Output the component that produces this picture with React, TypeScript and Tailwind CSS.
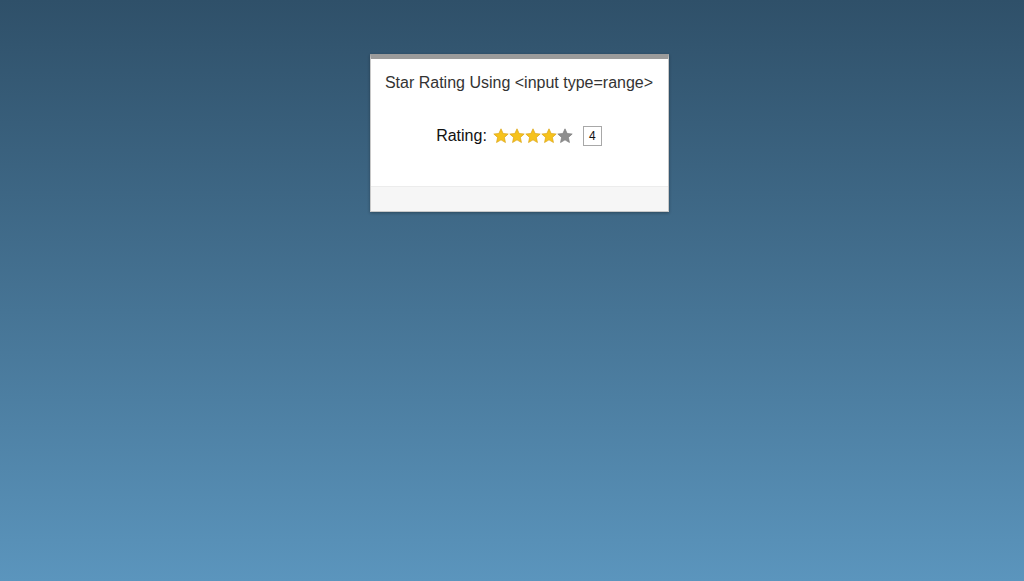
import React from "react";

function Star({ filled }: { filled: boolean }) {
  return (
    <svg width="16" height="16" viewBox="0 0 24 24" className="block">
      <polygon
        points="12,1.2 15.2,8.2 22.8,9 17.1,14.1 18.7,21.8 12,17.8 5.3,21.8 6.9,14.1 1.2,9 8.8,8.2"
        fill={filled ? "#f6c21c" : "#8f8f8f"}
        stroke={filled ? "#d9a210" : "#7a7a7a"}
        strokeWidth="1"
        strokeLinejoin="round"
      />
    </svg>
  );
}

export default function App() {
  const value = 4;
  return (
    <div
      className="min-h-[581px] w-full bg-gradient-to-b from-[#2f5069] to-[#5b95bd] flex justify-center pl-[14px] pt-[54px]"
      style={{ fontFamily: '"Liberation Sans", Arial, sans-serif' }}
    >
      <div className="w-[299px] h-[158px] self-start bg-white border-x border-b border-[#c8c8c8] border-t-[5px] border-t-[#9b9b9b] shadow-[0_1px_3px_rgba(0,0,0,0.3)] flex flex-col">
        <div className="flex-1 flex flex-col items-center">
          <div className="mt-[15px] text-[16px] leading-[18px] text-[#333]">
            Star Rating Using &lt;input type=range&gt;
          </div>
          <div className="mt-[34px] flex items-center text-[16px] leading-[18px] text-[#111]">
            <span className="mr-[6px]">Rating:</span>
            <div className="flex">
              {[1, 2, 3, 4, 5].map((i) => (
                <Star key={i} filled={i <= value} />
              ))}
            </div>
            <div className="ml-[10px] w-[19px] h-[20px] border border-[#a8a8a8] flex items-center justify-center text-[12px] text-[#111]">
              {value}
            </div>
          </div>
        </div>
        <div className="h-[25px] bg-[#f6f6f6] border-t border-[#ececec]" />
      </div>
    </div>
  );
}
